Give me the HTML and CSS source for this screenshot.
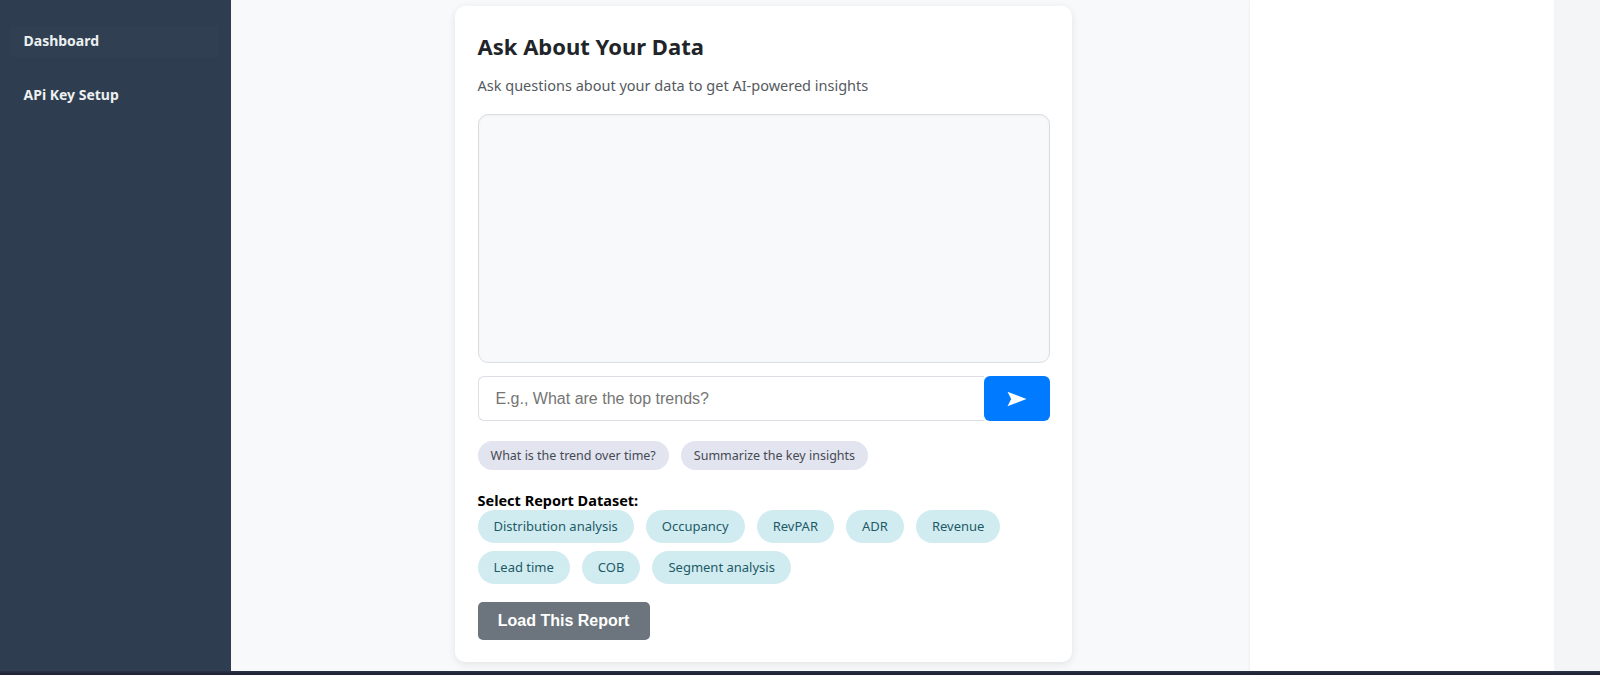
FILE: index.html
```html
<!DOCTYPE html>
<html>
<head>
<meta charset="utf-8">
<link rel="stylesheet" href="styles.css">
</head>
<body>
<div class="app">
  <aside class="sidebar">
    <a class="nav-item active">Dashboard</a>
    <a class="nav-item">APi Key Setup</a>
  </aside>
  <main class="main">
    <section class="card">
      <h2 class="title">Ask About Your Data</h2>
      <p class="subtitle">Ask questions about your data to get AI-powered insights</p>
      <div class="chat-box"></div>
      <div class="input-row">
        <input class="chat-input" type="text" placeholder="E.g., What are the top trends?">
        <button class="send-btn" aria-label="Send">
          <svg width="20" height="16" viewBox="0 0 20 16"><path d="M0.5 0.8 L19.5 8 L0.5 15.2 L4.2 8 Z" fill="#ffffff"/></svg>
        </button>
      </div>
      <div class="suggestions">
        <span class="suggestion">What is the trend over time?</span>
        <span class="suggestion">Summarize the key insights</span>
      </div>
      <div class="dataset-label">Select Report Dataset:</div>
      <div class="datasets">
        <span class="dataset">Distribution analysis</span>
        <span class="dataset">Occupancy</span>
        <span class="dataset">RevPAR</span>
        <span class="dataset">ADR</span>
        <span class="dataset">Revenue</span>
        <span class="dataset">Lead time</span>
        <span class="dataset">COB</span>
        <span class="dataset">Segment analysis</span>
      </div>
      <button class="load-btn">Load This Report</button>
    </section>
    <div class="spacer"></div>
    <aside class="right-panel"></aside>
    <div class="right-edge"></div>
  </main>
</div>
<div class="taskbar"></div>
</body>
</html>
```

FILE: styles.css
```css
* { box-sizing: border-box; }
html, body { margin: 0; padding: 0; }
body {
  width: 1600px;
  height: 675px;
  overflow: hidden;
  font-family: "Noto Sans", "Segoe UI", sans-serif;
  background: #f8f9fa;
}
.app {
  display: flex;
  height: 671px;
}
.sidebar {
  width: 231px;
  flex: none;
  background: #2e3e50;
  display: flex;
  flex-direction: column;
  padding: 25px 12px 0 10px;
  gap: 22px;
}
.nav-item {
  display: block;
  color: #ecf0f1;
  font-weight: 700;
  font-size: 14px;
  line-height: 32px;
  padding: 0 0 0 13.5px;
  border-radius: 4px;
}
.nav-item.active { background: rgba(255,255,255,0.012); }
.main {
  flex: 1;
  display: flex;
  align-items: flex-start;
  padding-left: 224px;
  background: #f8f9fa;
}
.card {
  width: 617px;
  flex: none;
  margin-top: 6px;
  background: #ffffff;
  border-radius: 10px;
  box-shadow: 0 2px 8px rgba(0,0,0,0.09);
  padding: 26px 22px 22px 22.5px;
}
.title {
  margin: 0;
  font-size: 22px;
  font-weight: 700;
  color: #212529;
  line-height: 28px;
}
.subtitle {
  margin: 15px 0 0;
  font-size: 14.5px;
  color: #555a60;
  line-height: 20px;
}
.chat-box {
  margin-top: 19px;
  height: 249px;
  background: #f8f9fa;
  border: 1px solid #dadde1;
  border-radius: 10px;
  box-shadow: inset 0 1px 3px rgba(0,0,0,0.04);
}
.input-row {
  display: flex;
  margin-top: 13px;
  height: 45px;
}
.chat-input {
  flex: 1;
  min-width: 0;
  border: 1px solid #dcdfe3;
  border-right: none;
  border-radius: 6px 0 0 6px;
  padding: 0 17px;
  font-family: "Liberation Sans", Arial, sans-serif;
  font-size: 16px;
  color: #333;
  background: #fff;
  outline: none;
}
.chat-input::placeholder { color: #757575; }
.send-btn {
  width: 66px;
  flex: none;
  border: none;
  background: #007bff;
  border-radius: 6px;
  display: flex;
  align-items: center;
  justify-content: center;
  padding: 0;
}
.suggestions {
  display: flex;
  gap: 12px;
  margin-top: 20px;
}
.suggestion {
  background: #e2e4f0;
  color: #454a52;
  font-size: 12.5px;
  line-height: 29px;
  padding: 0 13px;
  border-radius: 15px;
}
.dataset-label {
  margin-top: 20px;
  font-size: 14.5px;
  font-weight: 700;
  color: #000;
  line-height: 20px;
}
.datasets {
  display: flex;
  flex-wrap: wrap;
  gap: 8px 12px;
  width: 540px;
}
.dataset {
  background: #d1ecf1;
  color: #1e5a66;
  font-size: 13px;
  line-height: 33px;
  padding: 0 16px;
  border-radius: 17px;
}
.load-btn {
  margin-top: 18px;
  width: 172px;
  height: 38px;
  border: none;
  border-radius: 5px;
  background: #6c757d;
  color: #fff;
  font-family: "Liberation Sans", Arial, sans-serif;
  font-weight: 700;
  font-size: 16px;
  display: block;
}
.spacer { width: 178px; flex: none; }
.right-panel {
  width: 304px;
  flex: none;
  align-self: stretch;
  background: #ffffff;
  box-shadow: -1px 0 3px rgba(0,0,0,0.04);
}
.right-edge {
  flex: 1;
  align-self: stretch;
  background: #f4f5f6;
}
.taskbar {
  height: 4px;
  background: linear-gradient(#2a3244, #1a2030);
}
```
